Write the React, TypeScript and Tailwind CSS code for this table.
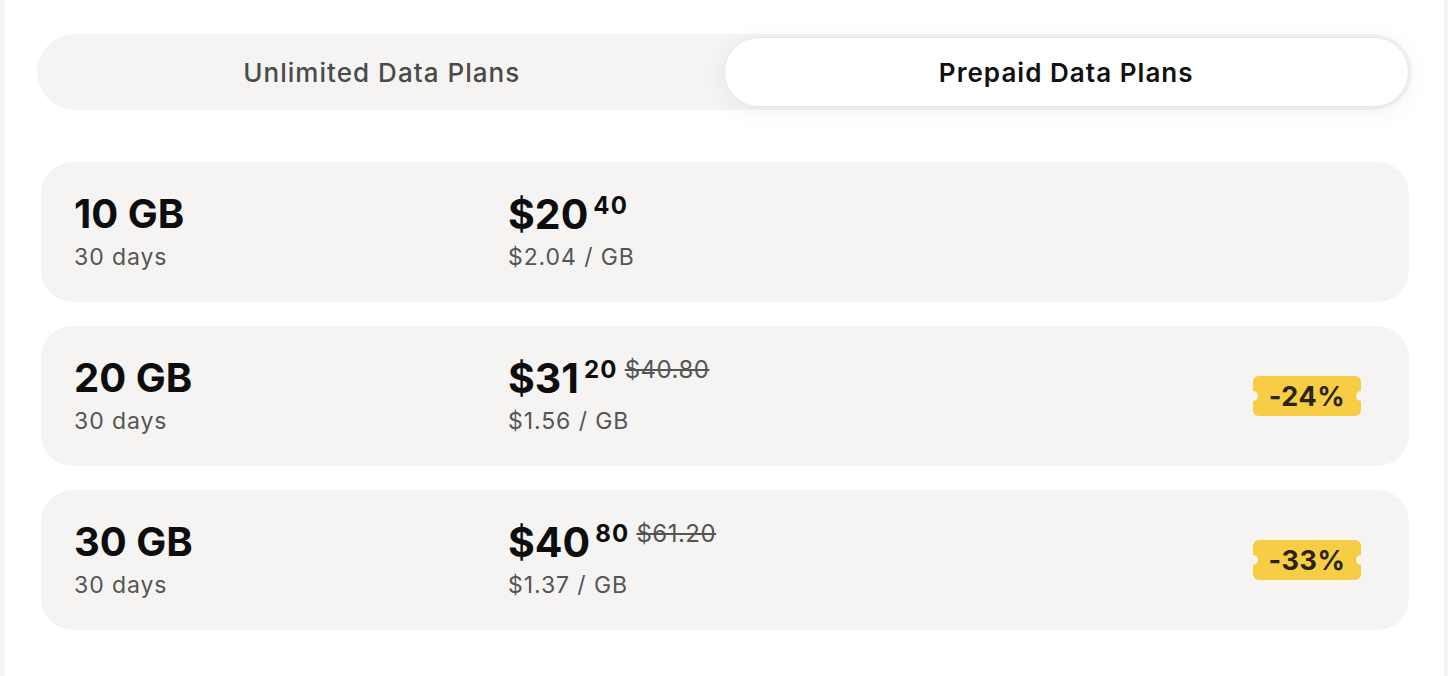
import React from "react";

const plans = [
  { gb: "10 GB", days: "30 days", dollars: "$20", cents: "40", old: "", per: "$2.04 / GB", badge: "" },
  { gb: "20 GB", days: "30 days", dollars: "$31", cents: "20", old: "$40.80", per: "$1.56 / GB", badge: "-24%" },
  { gb: "30 GB", days: "30 days", dollars: "$40", cents: "80", old: "$61.20", per: "$1.37 / GB", badge: "-33%" },
];

function Badge({ text }: { text: string }) {
  return (
    <div className="relative flex h-[40px] w-[108px] items-center justify-center rounded-[6px] bg-[#f7cd45]">
      <span className="text-[27px] font-bold leading-none tracking-[0.02em] text-[#2a2414]">{text}</span>
      <span className="absolute left-[-5px] top-1/2 h-[10px] w-[10px] -translate-y-1/2 rounded-full bg-[#f5f4f2]" />
      <span className="absolute right-[-5px] top-1/2 h-[10px] w-[10px] -translate-y-1/2 rounded-full bg-[#f5f4f2]" />
    </div>
  );
}

export default function App() {
  return (
    <div
      className="flex h-[676px] bg-[#f5f4f2] pl-[5px] pr-[4px]"
      style={{ fontFamily: "Inter, 'Noto Sans', sans-serif" }}
    >
      <div className="flex-1 bg-white px-[32px] pt-[34px]">
        <div className="flex h-[76px] rounded-full bg-[#f5f4f2] p-[3px]">
          <button className="flex-1 rounded-full text-[26px] font-medium tracking-[0.04em] text-[#4a4a4a]">
            Unlimited Data Plans
          </button>
          <button className="flex-1 rounded-full border border-[#ebe9e6] bg-white text-[26px] font-semibold tracking-[0.04em] text-[#111] shadow-[0_4px_24px_rgba(0,0,0,0.06)]">
            Prepaid Data Plans
          </button>
        </div>

        <div className="ml-[4px] mr-[3px] mt-[52px] flex flex-col gap-[24px]">
          {plans.map((p) => (
            <div
              key={p.gb}
              className="flex h-[140px] items-center rounded-[32px] bg-[#f5f4f2] pl-[33px] pr-[48px]"
            >
              <div className="w-[434px]">
                <div className="text-[40px] font-bold leading-[40px] text-[#0d0d0d]">{p.gb}</div>
                <div className="mt-[9px] text-[23px] leading-[28px] tracking-[0.04em] text-[#555]">{p.days}</div>
              </div>
              <div className="flex-1">
                <div className="flex items-start">
                  <span className="text-[41px] font-bold leading-[40px] text-[#0d0d0d]">{p.dollars}</span>
                  <span className="ml-[5px] text-[24px] font-bold leading-[24px] tracking-[0.05em] text-[#0d0d0d]">
                    {p.cents}
                  </span>
                  {p.old && (
                    <span className="ml-[7px] text-[24px] leading-[24px] tracking-[0.02em] text-[#555] line-through">
                      {p.old}
                    </span>
                  )}
                </div>
                <div className="mt-[9px] text-[23px] leading-[28px] tracking-[0.04em] text-[#555]">{p.per}</div>
              </div>
              {p.badge && <Badge text={p.badge} />}
            </div>
          ))}
        </div>
      </div>
    </div>
  );
}
